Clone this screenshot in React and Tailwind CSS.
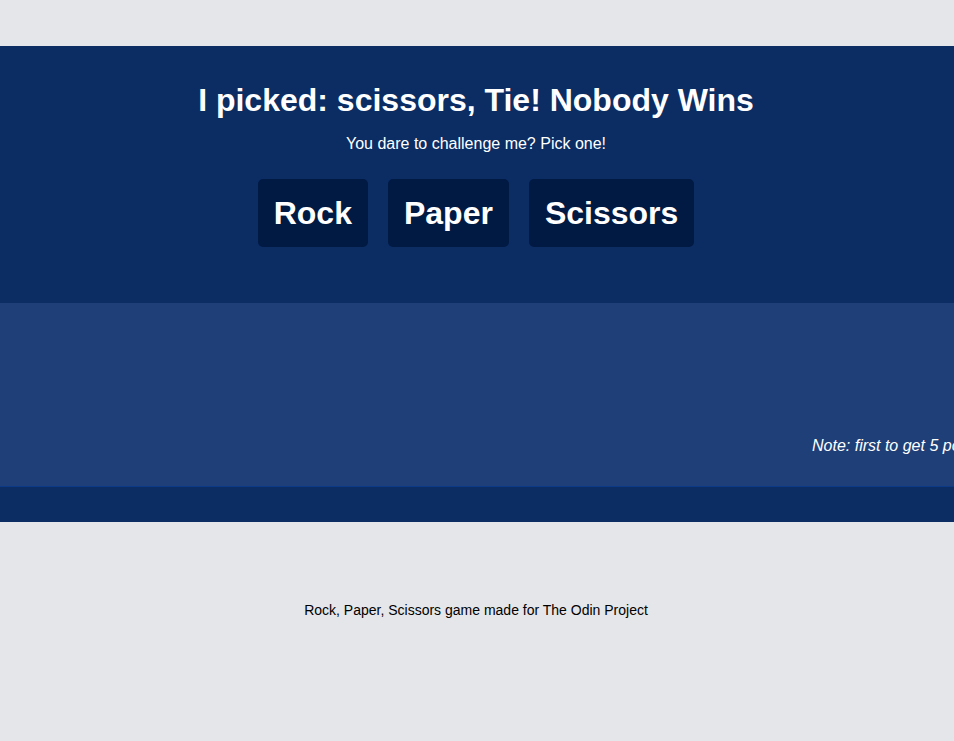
export default function App() {
  return (
    <div className="min-h-screen overflow-hidden bg-[#e5e6e9] pt-[46px] font-['Liberation_Sans',Arial,sans-serif]">
      <main className="bg-[#0b2d64] text-white">
        <div className="flex flex-col items-center pt-[36px] pr-[2px]">
          <h1 className="text-[32px] font-bold leading-[37px]">
            I picked: scissors, Tie! Nobody Wins
          </h1>
          <p className="mt-[16px] text-base leading-[18px]">You dare to challenge me? Pick one!</p>
          <div className="mt-[26px] flex gap-5">
            {["Rock", "Paper", "Scissors"].map((c) => (
              <button
                key={c}
                className="rounded-[5px] bg-[#011a44] px-4 py-[15px] text-[32px] font-bold leading-[38px] text-white"
              >
                {c}
              </button>
            ))}
          </div>
        </div>
        <section className="mt-[56px] h-[184px] border-b border-[#0d3a86] bg-[#1e3f78] pt-[134px]">
          <p className="whitespace-nowrap pl-[812px] text-base italic leading-[18px]">
            Note: first to get 5 points wins!
          </p>
        </section>
        <div className="h-[35px]" />
      </main>
      <footer className="pt-[80px] pr-[2px] text-center text-sm leading-4 text-black">
        Rock, Paper, Scissors game made for The Odin Project
      </footer>
    </div>
  );
}
